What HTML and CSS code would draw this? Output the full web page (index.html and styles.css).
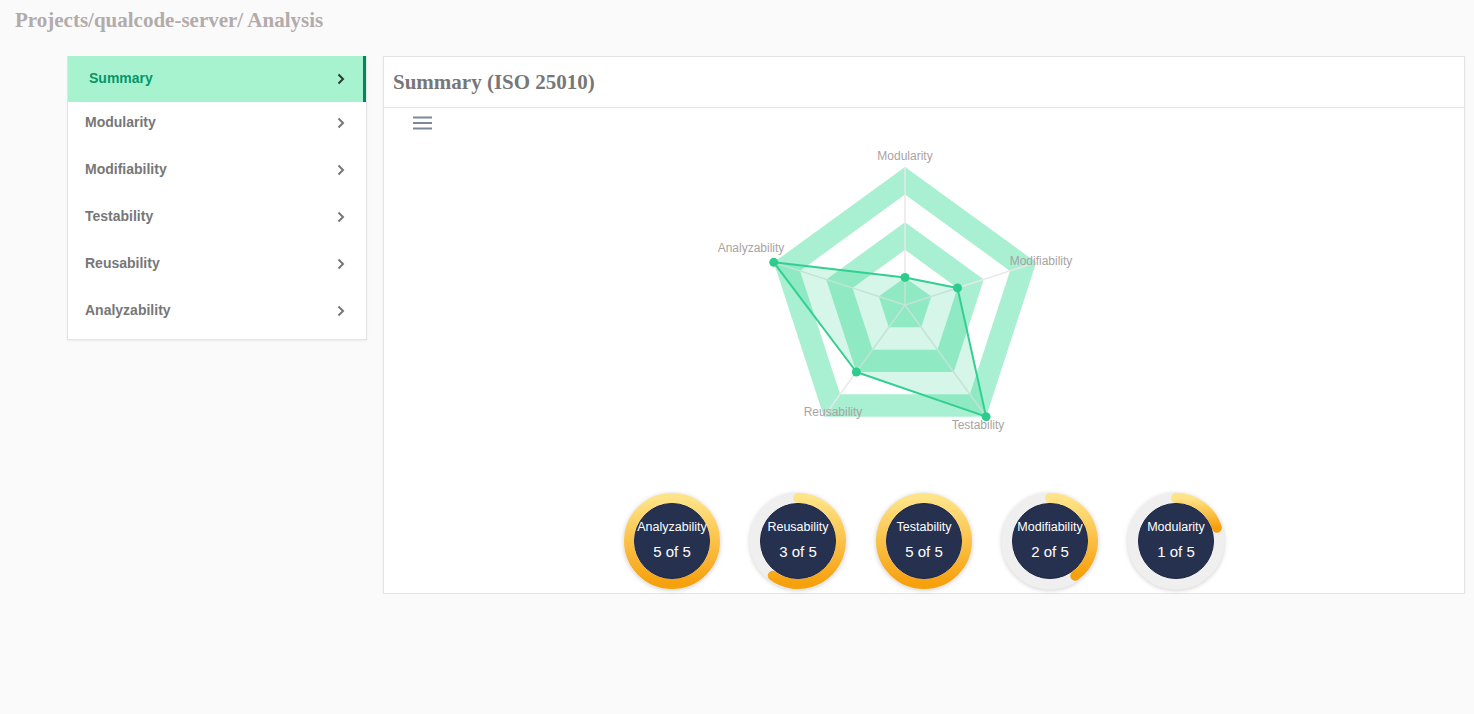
FILE: index.html
```html
<!DOCTYPE html>
<html lang="en">
<head>
<meta charset="utf-8">
<title>Analysis</title>
<link rel="stylesheet" href="styles.css">
</head>
<body>
<h1 class="crumb">Projects/qualcode-server/ Analysis</h1>
<div class="layout">
  <nav class="sidebar">
    <a class="item active"><span>Summary</span><svg class="chev" viewBox="0 0 8 12"><path d="M1.5 1.5 6 6l-4.5 4.5"/></svg></a>
    <a class="item"><span>Modularity</span><svg class="chev" viewBox="0 0 8 12"><path d="M1.5 1.5 6 6l-4.5 4.5"/></svg></a>
    <a class="item"><span>Modifiability</span><svg class="chev" viewBox="0 0 8 12"><path d="M1.5 1.5 6 6l-4.5 4.5"/></svg></a>
    <a class="item"><span>Testability</span><svg class="chev" viewBox="0 0 8 12"><path d="M1.5 1.5 6 6l-4.5 4.5"/></svg></a>
    <a class="item"><span>Reusability</span><svg class="chev" viewBox="0 0 8 12"><path d="M1.5 1.5 6 6l-4.5 4.5"/></svg></a>
    <a class="item"><span>Analyzability</span><svg class="chev" viewBox="0 0 8 12"><path d="M1.5 1.5 6 6l-4.5 4.5"/></svg></a>
  </nav>
  <section class="panel">
    <header class="panel-head">Summary (ISO 25010)</header>
    <div class="chart">
      <svg class="menu" viewBox="0 0 20 14"><path d="M0 1.5h19M0 7h19M0 12.5h19"/></svg>
      <svg class="radar" viewBox="0 0 1080 383" width="1080" height="383">
        <polygon class="band" points="521,59 652.25,154.36 602.12,308.64 439.88,308.64 389.75,154.36"/>
        <polygon class="gap" points="521,86.6 626,162.89 585.89,286.31 456.11,286.31 416,162.89"/>
        <polygon class="band" points="521,114.2 599.75,171.41 569.67,263.99 472.33,263.99 442.25,171.41"/>
        <polygon class="gap" points="521,141.8 573.5,179.94 553.45,241.66 488.55,241.66 468.5,179.94"/>
        <polygon class="band" points="521,169.4 547.25,188.47 537.22,219.33 504.78,219.33 494.75,188.47"/>
        <g class="axis">
          <line x1="521" y1="197" x2="521" y2="59"/>
          <line x1="521" y1="197" x2="652.25" y2="154.36"/>
          <line x1="521" y1="197" x2="602.12" y2="308.64"/>
          <line x1="521" y1="197" x2="439.88" y2="308.64"/>
          <line x1="521" y1="197" x2="389.75" y2="154.36"/>
        </g>
        <polygon class="data" points="521,169.4 573.5,179.94 602.12,308.64 472.33,263.99 389.75,154.36"/>
        <g class="dots">
          <circle cx="521" cy="169.4" r="4.5"/>
          <circle cx="573.5" cy="179.94" r="4.5"/>
          <circle cx="602.12" cy="308.64" r="4.5"/>
          <circle cx="472.33" cy="263.99" r="4.5"/>
          <circle cx="389.75" cy="154.36" r="4.5"/>
        </g>
        <g class="labels">
          <text x="521" y="48">Modularity</text>
          <text x="657" y="153">Modifiability</text>
          <text x="594" y="317">Testability</text>
          <text x="449" y="304">Reusability</text>
          <text x="367" y="140">Analyzability</text>
        </g>
      </svg>
    </div>
    <div class="gauges">
      <svg class="gauge" viewBox="0 0 100 100" width="100" height="100">
        <defs>
          <linearGradient id="gold" x1="0" y1="0" x2="0" y2="1"><stop offset="0" stop-color="#ffe487"/><stop offset="1" stop-color="#f6a00c"/></linearGradient>
        </defs>
        <circle class="track" cx="50" cy="50" r="43"/>
        <circle class="arc" cx="50" cy="50" r="43"/>
        <circle class="core" cx="50" cy="50" r="37.5"/>
        <text class="g-name" x="50" y="36">Analyzability</text>
        <text class="g-val" x="50" y="60">5 of 5</text>
      </svg>
      <svg class="gauge" viewBox="0 0 100 100" width="100" height="100">
        <circle class="track" cx="50" cy="50" r="43"/>
        <path class="arc" d="M50 7A43 43 0 1 1 24.73 84.79"/>
        <circle class="core" cx="50" cy="50" r="37.5"/>
        <text class="g-name" x="50" y="36">Reusability</text>
        <text class="g-val" x="50" y="60">3 of 5</text>
      </svg>
      <svg class="gauge" viewBox="0 0 100 100" width="100" height="100">
        <circle class="track" cx="50" cy="50" r="43"/>
        <circle class="arc" cx="50" cy="50" r="43"/>
        <circle class="core" cx="50" cy="50" r="37.5"/>
        <text class="g-name" x="50" y="36">Testability</text>
        <text class="g-val" x="50" y="60">5 of 5</text>
      </svg>
      <svg class="gauge" viewBox="0 0 100 100" width="100" height="100">
        <circle class="track" cx="50" cy="50" r="43"/>
        <path class="arc" d="M50 7A43 43 0 0 1 75.27 84.79"/>
        <circle class="core" cx="50" cy="50" r="37.5"/>
        <text class="g-name" x="50" y="36">Modifiability</text>
        <text class="g-val" x="50" y="60">2 of 5</text>
      </svg>
      <svg class="gauge" viewBox="0 0 100 100" width="100" height="100">
        <circle class="track" cx="50" cy="50" r="43"/>
        <path class="arc" d="M50 7A43 43 0 0 1 90.9 36.71"/>
        <circle class="core" cx="50" cy="50" r="37.5"/>
        <text class="g-name" x="50" y="36">Modularity</text>
        <text class="g-val" x="50" y="60">1 of 5</text>
      </svg>
    </div>
  </section>
</div>
</body>
</html>
```
FILE: styles.css
```css
* { box-sizing: border-box; }
body {
  margin: 0;
  background: #fafafa;
  font-family: "Liberation Sans", Arial, sans-serif;
}
.crumb {
  margin: 0;
  padding: 8px 15px 0;
  font-family: "Liberation Serif", "Times New Roman", serif;
  font-size: 21px;
  line-height: 24px;
  font-weight: bold;
  color: #b3abab;
}
.layout {
  display: flex;
  align-items: flex-start;
  gap: 16px;
  margin: 24px 9px 0 67px;
}
.sidebar {
  width: 300px;
  flex: none;
  background: #fff;
  border: 1px solid #e4e4e4;
  border-top: none;
  box-shadow: 0 1px 2px rgba(0,0,0,0.06);
  display: flex;
  flex-direction: column;
  padding-bottom: 2px;
}
.item {
  display: flex;
  align-items: flex-start;
  justify-content: space-between;
  height: 47px;
  padding: 12px 21px 0 17px;
  font-size: 14px;
  line-height: 17px;
  font-weight: bold;
  color: #777;
}
.item .chev {
  width: 8px;
  height: 12px;
  margin-top: 3px;
  fill: none;
  stroke: #777;
  stroke-width: 2;
}
.item.active {
  height: 46px;
  padding: 14px 18px 0 21px;
  background: #a7f3d0;
  color: #059669;
  border-right: 3px solid #05875b;
}
.item.active .chev { stroke: #2d3a35; }
.panel {
  flex: 1;
  background: #fff;
  border: 1px solid #e3e3e3;
  box-shadow: 0 1px 2px rgba(0,0,0,0.05);
}
.panel-head {
  height: 51px;
  padding: 0 9px;
  border-bottom: 1px solid #e6e6e6;
  font-family: "Liberation Serif", "Times New Roman", serif;
  font-size: 21px;
  line-height: 50px;
  font-weight: bold;
  color: #777;
}
.chart {
  position: relative;
  height: 383px;
}
.radar { display: block; }
.menu {
  position: absolute;
  left: 29px;
  top: 8px;
  width: 20px;
  height: 14px;
  fill: none;
  stroke: #7d8797;
  stroke-width: 2;
}
.band { fill: #a8f0d1; }
.gap { fill: #fff; }
.axis line { stroke: #e8e8e8; stroke-width: 1.5; }
.data {
  fill: rgba(47, 208, 143, 0.2);
  stroke: #33cf92;
  stroke-width: 2;
  stroke-linejoin: round;
}
.dots circle { fill: #2ecc8c; }
.labels text {
  font-family: "Liberation Sans", Arial, sans-serif;
  font-size: 12px;
  fill: #a9a3a3;
  text-anchor: middle;
  dominant-baseline: central;
}
.gauges {
  display: flex;
  justify-content: center;
  gap: 26px;
  height: 102px;
  padding-bottom: 2px;
}
.gauge {
  display: block;
  overflow: visible;
}
.track {
  fill: none;
  stroke: #efefef;
  stroke-width: 11;
  filter: drop-shadow(0 1px 2px rgba(0,0,0,0.18));
}
.arc {
  fill: none;
  stroke: url(#gold);
  stroke-width: 10;
  stroke-linecap: round;
}
.core {
  fill: #263150;
  stroke: #1c2440;
  stroke-width: 1;
}
.g-name {
  font-family: "Liberation Sans", Arial, sans-serif;
  font-size: 12.5px;
  fill: #fff;
  text-anchor: middle;
  dominant-baseline: central;
}
.g-val {
  font-family: "Liberation Sans", Arial, sans-serif;
  font-size: 15px;
  fill: #fff;
  text-anchor: middle;
  dominant-baseline: central;
}
```
